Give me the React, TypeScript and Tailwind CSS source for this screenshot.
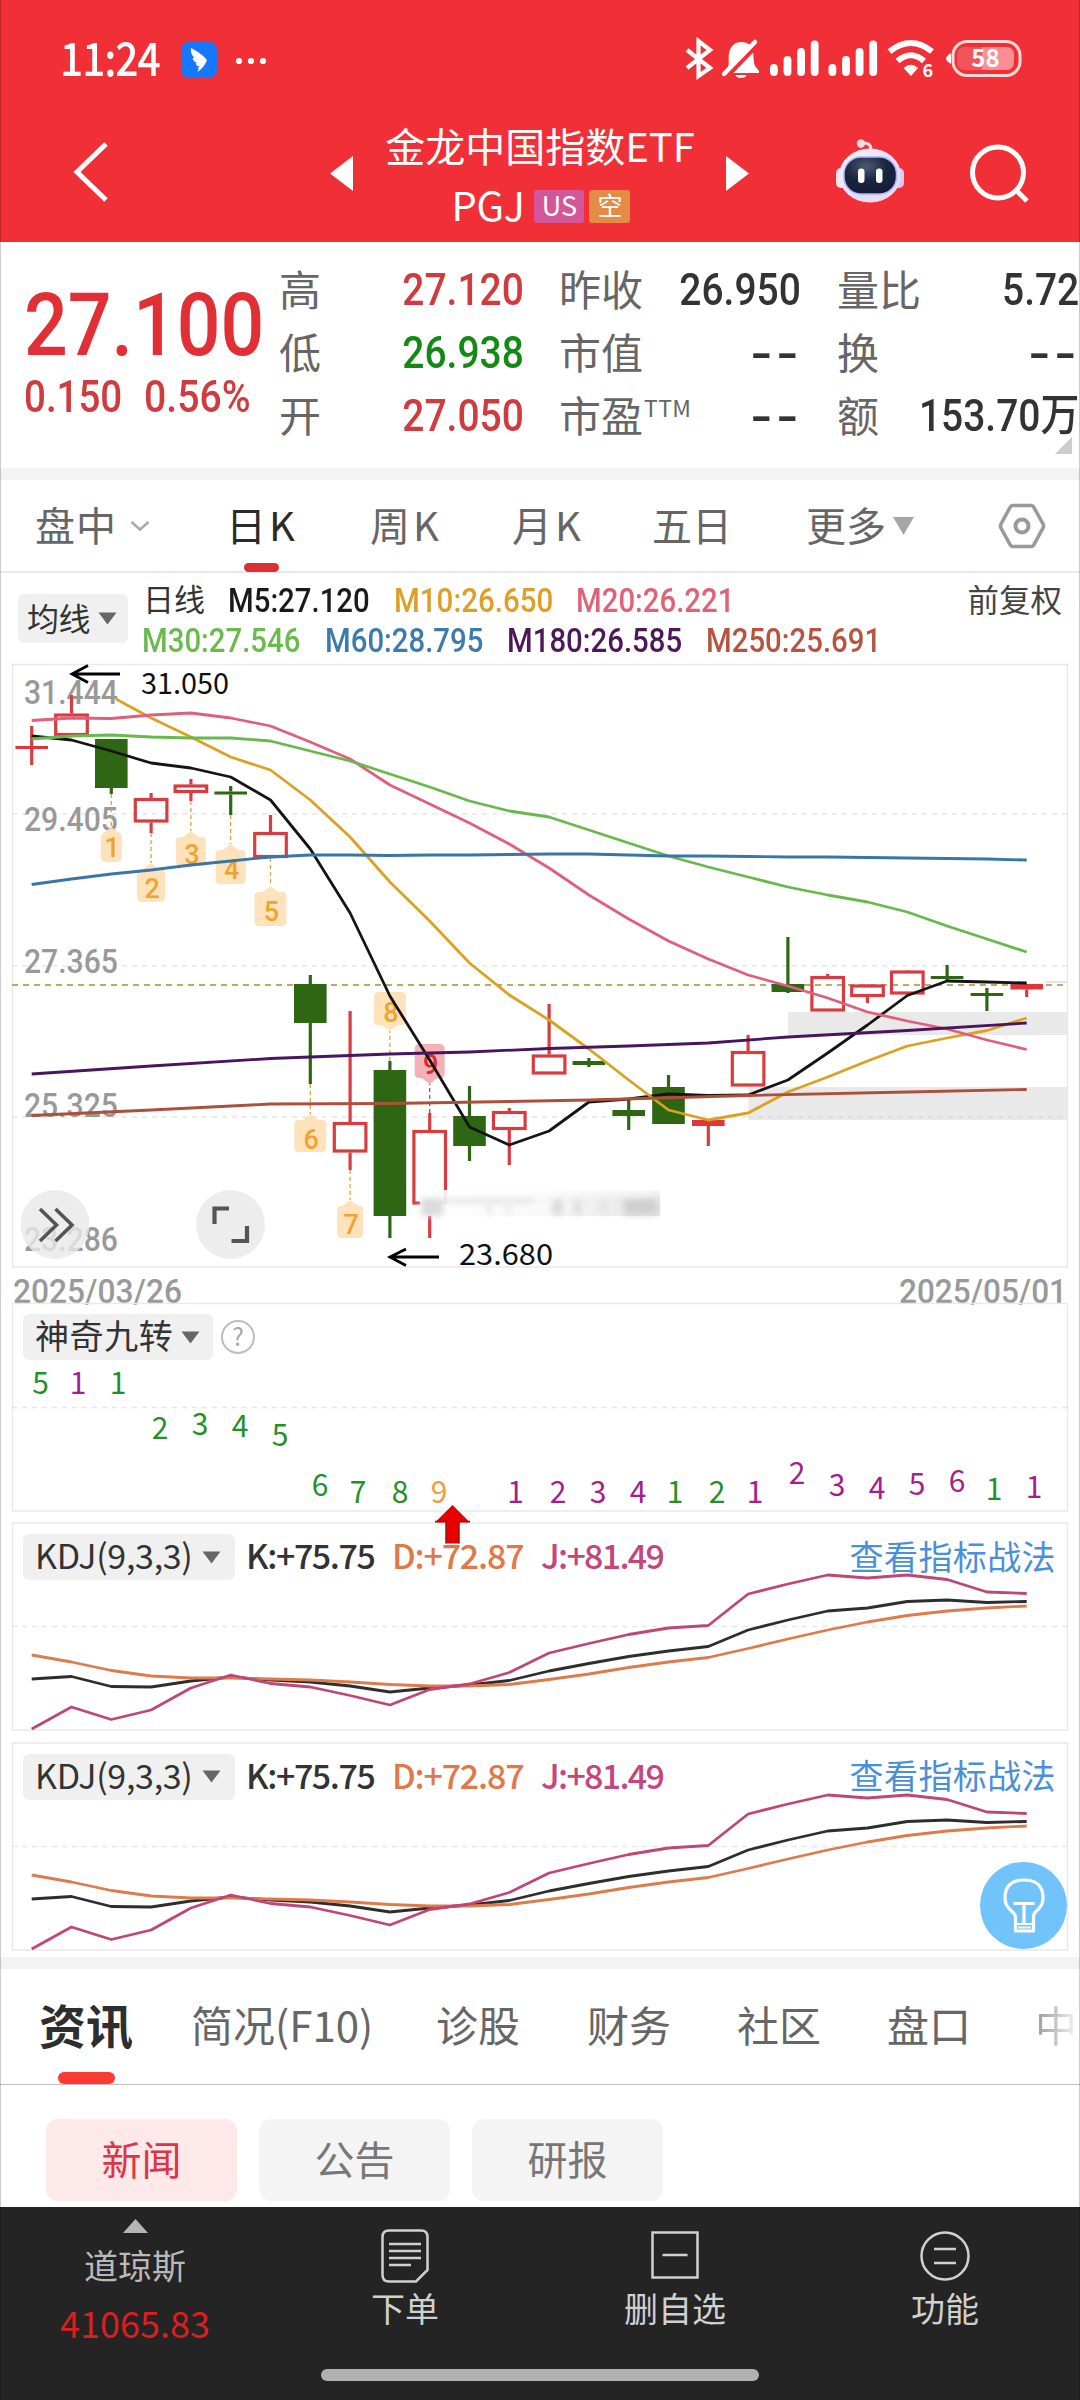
import React from "react";

const CJK = "font-['Noto_Sans_CJK_SC',sans-serif]";
const DIN = "font-['Roboto','Noto_Sans_CJK_SC',sans-serif]";

const STEP = 39.8;
const cx = (i: number) => 31.7 + STEP * i;

type Candle = { up: boolean; hi: number; top: number; bottom: number; lo: number; solid?: boolean };

const candles: Candle[] = [
  { up: true, hi: 726, top: 746, bottom: 749, lo: 765, solid: true },
  { up: true, hi: 695, top: 713.5, bottom: 736, lo: 736 },
  { up: false, hi: 739, top: 739, bottom: 788, lo: 794 },
  { up: true, hi: 793, top: 798, bottom: 822.5, lo: 833 },
  { up: true, hi: 779, top: 784.5, bottom: 793, lo: 801 },
  { up: false, hi: 786, top: 791.5, bottom: 794.5, lo: 815 },
  { up: true, hi: 815, top: 832, bottom: 858, lo: 858 },
  { up: false, hi: 975, top: 984, bottom: 1023, lo: 1084 },
  { up: true, hi: 1011, top: 1122, bottom: 1152.5, lo: 1170 },
  { up: false, hi: 1061, top: 1070, bottom: 1216, lo: 1238 },
  { up: true, hi: 1113, top: 1130, bottom: 1204.5, lo: 1238 },
  { up: false, hi: 1086, top: 1116, bottom: 1146, lo: 1161 },
  { up: true, hi: 1108, top: 1111, bottom: 1130, lo: 1165 },
  { up: true, hi: 1004, top: 1054.5, bottom: 1074.5, lo: 1074 },
  { up: false, hi: 1058, top: 1061, bottom: 1065, lo: 1067 },
  { up: false, hi: 1100, top: 1110, bottom: 1116, lo: 1130 },
  { up: false, hi: 1075, top: 1087, bottom: 1124, lo: 1124 },
  { up: true, hi: 1120, top: 1120, bottom: 1126, lo: 1146, solid: true },
  { up: true, hi: 1035, top: 1051, bottom: 1086.5, lo: 1086 },
  { up: false, hi: 937, top: 984, bottom: 992, lo: 993 },
  { up: true, hi: 974, top: 976, bottom: 1011.5, lo: 1011 },
  { up: true, hi: 984, top: 984.5, bottom: 997, lo: 1003 },
  { up: true, hi: 970, top: 970.5, bottom: 994.5, lo: 994 },
  { up: false, hi: 965, top: 976, bottom: 979, lo: 980 },
  { up: false, hi: 988, top: 993, bottom: 996, lo: 1011 },
  { up: true, hi: 984, top: 984, bottom: 989.5, lo: 997, solid: true },
];

const series = (ys: number[], start = 0) => ys.map((y, i) => `${cx(i + start).toFixed(1)},${y}`).join(" ");

const averages: { color: string; points: string }[] = [
  {
    color: "#141414",
    points: series([736, 740, 751, 763, 768, 777, 800, 849, 913, 996, 1060, 1127, 1145, 1131, 1102, 1099, 1094, 1095.5, 1095, 1080, 1053, 1025, 995.5, 981, 982, 983]),
  },
  {
    color: "#dca11f",
    points:
      "116,699 " +
      series([718, 737, 757, 770, 800, 837, 882, 921, 963, 995, 1020, 1049, 1080, 1110, 1120, 1113, 1092, 1077, 1061, 1046, 1038, 1030.5, 1018], 3),
  },
  {
    color: "#df5f7c",
    points: series([720.5, 718, 718.5, 715, 713, 718, 726, 742, 759, 785, 804, 823, 844, 868, 895, 919, 941, 959, 975, 986, 998, 1012, 1021, 1029, 1040, 1049.5]),
  },
  {
    color: "#68b94c",
    points: series([739, 736, 735, 737, 738, 738, 741, 751, 761, 774, 787, 801, 811, 817, 830, 843, 856, 867, 877, 887, 895, 902, 912, 926, 939, 952]),
  },
  {
    color: "#3677a8",
    points: series([884.5, 879, 874, 870, 865, 861, 857, 855, 855, 855.5, 855, 855, 854.5, 854, 854, 855, 856, 856, 856.5, 857, 857, 857.5, 858, 858.5, 859, 860]),
  },
  {
    color: "#47165e",
    points: `${cx(0)},1074 ${cx(3)},1066 ${cx(6)},1058.5 ${cx(9)},1054 ${cx(11)},1052 ${cx(13)},1048.5 ${cx(15)},1046 ${cx(17)},1043 ${cx(19)},1037 ${cx(22)},1030.5 ${cx(25)},1023`,
  },
  {
    color: "#ad4f3d",
    points: `${cx(0)},1115.5 ${cx(3)},1110 ${cx(6)},1104 ${cx(9)},1103.5 ${cx(12)},1101.5 ${cx(14)},1100 ${cx(18)},1095.5 ${cx(22)},1092 ${cx(25)},1089.5`,
  },
];

type Tag = { n: number; i: number; w: number; tip: number; end: number; from: number; down?: boolean; hot?: boolean; base: number };

const tags: Tag[] = [
  { n: 1, i: 2, w: 21, tip: 827, end: 862, from: 794, base: 857 },
  { n: 2, i: 3, w: 28, tip: 863, end: 902, from: 833, base: 898 },
  { n: 3, i: 4, w: 30, tip: 831, end: 866, from: 801, base: 864 },
  { n: 4, i: 5, w: 30, tip: 844, end: 884, from: 815, base: 879 },
  { n: 5, i: 6, w: 32, tip: 886, end: 926, from: 858, base: 921 },
  { n: 6, i: 7, w: 32, tip: 1114, end: 1152, from: 1084, base: 1149 },
  { n: 7, i: 8, w: 26, tip: 1200, end: 1238, from: 1170, base: 1234 },
  { n: 8, i: 9, w: 32, tip: 1031, end: 992, from: 1061, base: 1022, down: true },
  { n: 9, i: 10, w: 30, tip: 1084, end: 1044, from: 1113, base: 1074, down: true, hot: true },
];

const axis: [string, number][] = [
  ["31.444", 704],
  ["29.405", 831],
  ["27.365", 973],
  ["25.325", 1117],
  ["23.286", 1251],
];

function TagShape({ t }: { t: Tag }) {
  const x = cx(t.i);
  const h = t.w / 2;
  const s = t.down ? -1 : 1;
  const sh = t.tip + s * 7;
  const d = `M${x} ${t.tip} L${x + 8} ${sh - s * 1} H${x + h - 4} Q${x + h} ${sh - s} ${x + h} ${sh + s * 3} V${t.end - s * 5} Q${x + h} ${t.end} ${x + h - 5} ${t.end} H${x - h + 5} Q${x - h} ${t.end} ${x - h} ${t.end - s * 5} V${sh + s * 3} Q${x - h} ${sh - s} ${x - h + 4} ${sh - s} H${x - 8} Z`;
  return (
    <g>
      <line x1={x} x2={x} y1={t.from} y2={t.tip} stroke={t.hot ? "#c8434c" : "#d3a544"} strokeWidth="1.3" strokeDasharray="4 3" />
      <path d={d} fill={t.hot ? "#f4a2ab" : "#fde0b8"} fillOpacity={t.hot ? 0.85 : 0.95} />
      <text x={x + 1} y={t.base} textAnchor="middle" fontSize="27" fontWeight="500" fill={t.hot ? "#e0262f" : "#eda430"}>
        {t.n}
      </text>
    </g>
  );
}

function MainChart() {
  return (
    <svg className={`block h-[644px] w-[1080px] overflow-visible ${DIN}`} viewBox="0 660 1080 644">
      <defs>
        <filter id="soft" x="-20%" y="-40%" width="140%" height="180%">
          <feGaussianBlur stdDeviation="3" />
        </filter>
        <linearGradient id="smear" x1="0" x2="1" y1="0" y2="0">
          <stop offset="0" stopColor="#fff" />
          <stop offset="0.5" stopColor="#f8f8f8" />
          <stop offset="1" stopColor="#e2e2e2" />
        </linearGradient>
        <linearGradient id="fade" x1="0" x2="0" y1="0" y2="1">
          <stop offset="0" stopColor="#fff" />
          <stop offset="1" stopColor="#fff" stopOpacity="0" />
        </linearGradient>
      </defs>
      <rect x="12.5" y="664.5" width="1055" height="602.5" fill="none" stroke="#e9e9e9" strokeWidth="1.5" />
      {[814, 966, 1117].map((y) => (
        <line key={y} x1="12" x2="1067" y1={y} y2={y} stroke="#e6e6e6" strokeWidth="1.5" strokeDasharray="5 5" />
      ))}
      <rect x="788" y="1012" width="279" height="23" fill="#e9e9e9" />
      <rect x="748.5" y="1087" width="318.5" height="33" fill="#e9e9e9" />
      <line x1="748" x2="1067" y1="1117" y2="1117" stroke="#dadada" strokeWidth="1.5" strokeDasharray="5 5" />
      <line x1="1045" x2="1067" y1="982" y2="982" stroke="#e4e4e4" strokeWidth="2" />
      <line x1="12" x2="1067" y1="985" y2="985" stroke="#b9ac6b" strokeWidth="1.8" strokeDasharray="6 5" />

      {axis.map(([label, y]) => (
        <text key={label} x="24" y={y} fontSize="33.5" fontWeight="500" fill="#999" textLength="94" lengthAdjust="spacingAndGlyphs">
          {label}
        </text>
      ))}

      {candles.map((c, i) => {
        const x = cx(i);
        const color = c.up ? "#d93c40" : "#2f6614";
        return (
          <g key={i}>
            {c.hi < c.top && <line x1={x} x2={x} y1={c.hi} y2={c.top} stroke={color} strokeWidth="3.2" />}
            {c.lo > c.bottom && <line x1={x} x2={x} y1={c.bottom} y2={c.lo} stroke={color} strokeWidth="3.2" />}
            {c.up && !c.solid ? (
              <rect x={x - 15.8} y={c.top + 1.5} width="31.6" height={c.bottom - c.top - 3} fill="none" stroke={color} strokeWidth="3.2" />
            ) : (
              <rect x={x - 16.3} y={c.top} width="32.6" height={c.bottom - c.top} fill={c.up ? "#e23539" : color} />
            )}
          </g>
        );
      })}

      {tags.map((t) => (
        <TagShape key={t.n} t={t} />
      ))}

      {averages.map((a) => (
        <polyline key={a.color} points={a.points} fill="none" stroke={a.color} strokeWidth="2.8" strokeLinejoin="round" />
      ))}

      <g>
        <rect x="420" y="1190" width="240" height="26" fill="url(#smear)" opacity="0.9" />
        <g filter="url(#soft)">
          <rect x="421" y="1198" width="22" height="18" fill="#d9dddc" />
          <rect x="444" y="1199" width="90" height="3" fill="#d4d4d4" />
          <rect x="486" y="1197" width="6" height="18" fill="#ebebeb" />
          <rect x="505" y="1197" width="6" height="18" fill="#eeeeee" />
          <rect x="553" y="1199" width="9" height="16" fill="#d8d8d8" />
          <rect x="574" y="1199" width="7" height="16" fill="#dedede" />
          <rect x="600" y="1199" width="7" height="16" fill="#e4e4e4" />
          <rect x="624" y="1199" width="33" height="16" fill="#d0d0d0" />
        </g>
        <rect x="450" y="1186" width="215" height="14" fill="url(#fade)" />
      </g>

      <g stroke="#000" strokeWidth="2.8" fill="none">
        <path d="M120 674H72M88 665.5L72 674L88 682.5" />
        <path d="M439 1257H390M406 1249L390 1257L406 1265.5" />
      </g>
      <g className={CJK} fontSize="29" fill="#111">
        <text x="141" y="693.5" textLength="88" lengthAdjust="spacingAndGlyphs">31.050</text>
        <text x="459" y="1265" textLength="94" lengthAdjust="spacingAndGlyphs">23.680</text>
      </g>

      <g fill="#e9e9e9" fillOpacity="0.8">
        <circle cx="55" cy="1224.5" r="34.5" />
        <circle cx="230.5" cy="1224.5" r="34.5" />
      </g>
      <g fill="none" stroke="#555" strokeWidth="3.6">
        <path d="M40 1209L56.5 1225L40 1241M55.5 1209L72 1225L55.5 1241" />
        <path d="M214.5 1224V1208.5H229M231.5 1241H247V1226" strokeWidth="4.2" />
      </g>

      <g fontSize="34" fontWeight="500" fill="#999">
        <text x="13" y="1303" textLength="169" lengthAdjust="spacingAndGlyphs">2025/03/26</text>
        <text x="899" y="1303" textLength="168" lengthAdjust="spacingAndGlyphs">2025/05/01</text>
      </g>
    </svg>
  );
}

const G = "#1f9128";
const P = "#a61e8c";
const nine: [string, number, number, string][] = [
  ["5", 40.6, 1394, G], ["1", 78, 1394, P], ["1", 118, 1394, G],
  ["2", 160, 1439, G], ["3", 200, 1435, G], ["4", 240, 1437, G], ["5", 280, 1446, G],
  ["6", 320, 1496, G], ["7", 358, 1503, G], ["8", 400, 1503, G], ["9", 439, 1503, "#e8a13c"],
  ["1", 515.5, 1503, P], ["2", 558, 1503, P], ["3", 598, 1503, P], ["4", 638, 1503, P],
  ["1", 675, 1503, G], ["2", 717, 1503, G], ["1", 755, 1503, P], ["2", 797, 1484, P],
  ["3", 837, 1496, P], ["4", 877, 1499, P], ["5", 917, 1495, P], ["6", 957, 1492, P],
  ["1", 994, 1500, G], ["1", 1034, 1498, P],
];

function Caret({ className = "" }: { className?: string }) {
  return (
    <svg className={className} width="19" height="13" viewBox="0 0 19 13">
      <path d="M0.5 0.5H18.5L9.5 12.5Z" fill="#666" />
    </svg>
  );
}

function NinePanel() {
  return (
    <div className="relative -mt-px h-[219px]">
      <svg className={`absolute inset-0 overflow-visible ${CJK}`} width="1080" height="219" viewBox="0 1303 1080 219">
        <rect x="12.5" y="1303.5" width="1055" height="207.5" fill="none" stroke="#e9e9e9" strokeWidth="1.5" />
        <line x1="12" x2="1067" y1="1407.5" y2="1407.5" stroke="#e6e6e6" strokeWidth="1.5" strokeDasharray="5 5" />
        <g fontSize="30" textAnchor="middle">
          {nine.map(([n, x, y, c], i) => (
            <text key={i} x={x} y={y} fill={c}>
              {n}
            </text>
          ))}
        </g>
      </svg>
      <div className="relative flex items-center pt-[11px] pl-[23px]">
        <div className={`flex h-[46px] w-[190px] items-center rounded-md bg-[#f0f0f0] pl-[12px] text-[34px] leading-none tracking-[0.6px] text-[#333] ${CJK}`}>
          <span className="-mt-[4px]">神奇九转</span>
          <Caret className="ml-[8px]" />
        </div>
        <div className={`ml-[8px] flex size-[34px] items-center justify-center rounded-full border-[2.5px] border-[#bdbdbd] pb-[3px] text-[25px] leading-none text-[#aaa] ${CJK}`}>?</div>
      </div>
      <svg className="absolute top-[202px] left-[434px] z-10" width="37" height="40" viewBox="434 1505 37 40">
        <path d="M452.5 1505L470 1522.5H459V1543.5H446V1522.5H435Z" fill="#e60000" />
        <path d="M435 1521.5H446V1543.5M470 1521.5H459V1543.5" fill="none" stroke="#a30f0f" strokeWidth="1.5" />
      </svg>
    </div>
  );
}

const kLine = series([1679, 1676.5, 1686.5, 1687, 1681, 1677, 1680, 1682, 1686, 1692, 1688, 1685, 1680.5, 1671, 1663.5, 1656.5, 1651, 1646.5, 1630, 1620, 1611, 1608, 1601.5, 1600, 1602.5, 1601.5]);
const dLine = series([1655, 1662, 1670.5, 1676, 1678, 1678, 1679, 1680, 1682, 1684.5, 1686, 1686, 1684.5, 1679.5, 1674, 1667.5, 1662, 1657.5, 1648.5, 1639, 1630, 1622, 1615.5, 1611, 1608, 1606]);
const jLine = series([1729, 1707, 1719.5, 1710, 1688, 1675, 1683.5, 1687, 1695.5, 1705, 1689.5, 1684, 1672.5, 1653, 1643.5, 1634.5, 1628, 1625.5, 1594, 1584, 1575, 1578, 1575, 1579.5, 1592, 1593.5]);

function KdjPanel() {
  return (
    <div className="relative h-[219.5px] pt-[12px]">
      <svg className="absolute inset-0" width="1080" height="219.5" viewBox="0 1522 1080 219.5">
        <rect x="12.5" y="1523" width="1055" height="207" fill="none" stroke="#e9e9e9" strokeWidth="1.5" />
        <line x1="12" x2="1067" y1="1626.5" y2="1626.5" stroke="#e6e6e6" strokeWidth="1.5" strokeDasharray="5 5" />
        <g fill="none" strokeWidth="2.8" strokeLinejoin="round">
          <polyline points={kLine} stroke="#2e2e2e" />
          <polyline points={dLine} stroke="#dd7b4b" />
          <polyline points={jLine} stroke="#bf4679" />
        </g>
      </svg>
      <div className={`relative flex h-[46px] items-center pl-[23px] text-[34px] leading-none ${CJK}`}>
        <div className="flex h-[46px] w-[212px] shrink-0 items-center rounded-md bg-[#f0f0f0] pl-[12px] text-[#333]">
          <span className="-mt-[4px] w-[167px] tracking-[-0.3px]">KDJ(9,3,3)</span>
          <Caret />
        </div>
        <span className="-mt-[4px] ml-[11px] w-[146px] font-medium tracking-[-1.4px] whitespace-nowrap text-[#333]">K:+75.75</span>
        <span className="-mt-[4px] w-[149px] font-medium tracking-[-1.2px] whitespace-nowrap text-[#e0794a]">D:+72.87</span>
        <span className="-mt-[4px] font-medium tracking-[-1.7px] whitespace-nowrap text-[#c4467c]">J:+81.49</span>
        <span className="-mt-[3px] mr-[24px] ml-auto tracking-[0.4px] text-[#4a90d9]">查看指标战法</span>
      </div>
    </div>
  );
}

function StatusBar() {
  const bars = [12, 20, 28, 35.5];
  return (
    <div className="flex h-[118px] items-center pl-[60px]">
      <span className="flex w-[121px]">
        <span className={`-mt-[7px] inline-block origin-left scale-x-[0.885] text-[46px] leading-none font-medium tracking-[-1.2px] text-white ${CJK}`}>11:24</span>
      </span>
      <svg className="mt-[2px]" width="36" height="36" viewBox="0 0 36 36">
        <rect width="36" height="36" rx="8" fill="#1677ff" />
        <path d="M10 6C15 8.500 22 13 26 18C24.500 22.500 21 27 16.500 30C17.500 28 18 26.500 17 25.500L19 24C17 24.500 15.500 23.500 14.500 21.500L16 21C13.500 20 12 18 11.500 16L13.500 16C10.500 13 9.500 10 10 6Z" fill="#fff" />
      </svg>
      <svg className="mt-[3px] ml-[17px]" width="34" height="10" viewBox="0 0 34 10">
        <circle cx="5" cy="5" r="3.1" fill="#fff" />
        <circle cx="17" cy="5" r="3.1" fill="#fff" />
        <circle cx="29" cy="5" r="3.1" fill="#fff" />
      </svg>
      <svg className={`mr-[50px] ml-auto ${CJK}`} width="345" height="46" viewBox="685 37 345 46">
        <path d="M687 51L710 69L698.5 77V42L710 51L687 69" fill="none" stroke="#fff" strokeWidth="4.2" />
        <path d="M727 70C730 66 728 60 729 54C731 46 736 43 741 43C746 43 750 45 752 49C754 54 753 62 755 67L759 72V74H727Z" fill="#fff" />
        <path d="M735.5 76H746.5C746 80 736 80 735.5 76Z" fill="#fff" />
        <path d="M726 78L759 44" stroke="#f12f37" strokeWidth="5" />
        <path d="M724 75L755 43" stroke="#fff" strokeWidth="4.5" strokeLinecap="round" />
        {[770, 828.5].map((x) =>
          bars.map((h, i) => <rect key={`${x}-${i}`} x={x + i * 13.6} y={77 - h} width="7.8" height={h} rx="3.9" fill="#fff" />),
        )}
        <g fill="none" stroke="#fff" strokeWidth="6">
          <path d="M889.5 52.5Q911 35.5 932 52.5" />
          <path d="M897.5 62Q911 50.5 924 62" />
        </g>
        <path d="M903.5 69Q911 62.5 918 69L911 77Z" fill="#fff" />
        <text x="922.5" y="78" fontSize="18" fontWeight="700" fill="#fff">6</text>
        <rect x="953" y="42.5" width="67" height="34" rx="14" fill="none" stroke="#ffd9da" strokeWidth="3" />
        <path d="M982 48H1006Q1014 48 1014 56V63Q1014 71 1006 71H982Z" fill="#f98f95" />
        <path d="M982 48H965Q957 48 957 56V63Q957 71 965 71H982Z" fill="#f0555b" />
        <path d="M951 54Q946 57 946 59.5Q946 62 951 65Z" fill="#fff" />
        <text x="985.5" y="68" textAnchor="middle" fontSize="24" fontWeight="700" fill="#fff">58</text>
      </svg>
    </div>
  );
}

function Robot() {
  return (
    <svg width="72" height="66" viewBox="834 138 72 66">
      <defs>
        <linearGradient id="shell" x1="0" y1="0" x2="1" y2="1">
          <stop offset="0" stopColor="#fff4f6" />
          <stop offset="0.6" stopColor="#e3dcfb" />
          <stop offset="1" stopColor="#fbd5e2" />
        </linearGradient>
        <radialGradient id="visor" cx="0.42" cy="0.25" r="0.8">
          <stop offset="0" stopColor="#4c5a72" />
          <stop offset="0.5" stopColor="#1a2540" />
          <stop offset="1" stopColor="#141c38" />
        </radialGradient>
      </defs>
      <path d="M862 143Q871 142 871 150" fill="none" stroke="#ffe1e6" strokeWidth="3" />
      <circle cx="861" cy="143.5" r="4.2" fill="#ffd9df" />
      <rect x="836" y="168" width="11" height="20" rx="5" fill="#ffe6ec" />
      <rect x="893" y="168" width="11" height="20" rx="5" fill="#d6c8fb" />
      <ellipse cx="870" cy="175.5" rx="31" ry="27" fill="url(#shell)" />
      <rect x="844" y="157" width="52.5" height="37" rx="17" fill="url(#visor)" stroke="#a8b4ff" strokeWidth="1.5" />
      <rect x="858" y="168.5" width="6.5" height="14.5" rx="3.2" fill="#fff" />
      <rect x="876" y="168.5" width="6.5" height="14.5" rx="3.2" fill="#fff" />
    </svg>
  );
}

function Header() {
  return (
    <header className="h-[242px] bg-[#f12f37] text-white">
      <StatusBar />
      <div className="flex h-[104px] items-center pl-[72px]">
        <svg className="mt-1 w-[258px]" width="258" height="64" viewBox="73 139 258 64">
          <path d="M107 143L78 171L107 199" fill="none" stroke="#fff" strokeWidth="5" />
        </svg>
        <svg className="mt-[6px]" width="23" height="35" viewBox="0 0 23 35"><path d="M23 0V35L0 17.5Z" fill="#fff" /></svg>
        <div className={`ml-[24px] flex h-[112px] w-[328px] flex-col items-center ${CJK}`}>
          <div className="mt-px ml-[-2px] text-[40px] leading-[60px] whitespace-nowrap">金龙中国指数ETF</div>
          <div className="mt-[11px] flex h-[44px] items-center gap-[5px]">
            <span className="-mt-[5px] mr-[5px] text-[40px] leading-none tracking-[-0.5px]">PGJ</span>
            <span className="flex h-[33px] w-[50px] items-center justify-center rounded-[3px] bg-[#d4569a] pb-[3px] text-[27px] leading-none">US</span>
            <span className="flex h-[33px] w-[41px] items-center justify-center rounded-[3px] bg-[#e38b47] pb-[3px] text-[25px] leading-none">空</span>
          </div>
        </div>
        <svg className="mt-[6px] ml-[21px]" width="23" height="35" viewBox="0 0 23 35"><path d="M0 0V35L23 17.5Z" fill="#fff" /></svg>
        <div className="mt-[2px] ml-[85px]"><Robot /></div>
        <svg className="mt-[7px] ml-[62px]" width="62" height="62" viewBox="968 143 62 62">
          <circle cx="998" cy="172.5" r="25.5" fill="none" stroke="#fff" strokeWidth="5" />
          <path d="M1016 190L1027 201" stroke="#fff" strokeWidth="5" />
        </svg>
      </div>
    </header>
  );
}

type Row = { label: string; sup?: string; value: string; color?: string };

function QuoteColumn({ rows, className }: { rows: Row[]; className: string }) {
  return (
    <div className={className}>
      {rows.map((r) => (
        <div key={r.label} className="relative flex h-[63px] items-center justify-between">
          <span className={`-mt-[6px] flex text-[42px] leading-none whitespace-nowrap text-[#666] ${CJK}`}>
            {r.label}
            {r.sup && <span className="mt-[3px] ml-[1px] text-[23px] leading-none tracking-[0.4px]">{r.sup}</span>}
          </span>
          {r.value === "--" ? (
            <span className="-mt-[2px] font-['Inter',sans-serif] text-[50px] leading-none font-medium tracking-[3px] text-[#333]">--</span>
          ) : (
            <span className={`absolute right-px origin-right scale-x-[0.875] text-[44.5px] leading-none font-medium whitespace-nowrap ${DIN} ${r.color ?? "text-[#333]"}`}>{r.value}</span>
          )}
        </div>
      ))}
    </div>
  );
}

function Quote() {
  return (
    <section className="relative flex h-[226px] pt-[17px]">
      <div className={`w-[279px] pl-[24px] text-[#e03035] ${DIN}`}>
        <div className="mt-[22px] origin-left scale-x-[0.875] text-[88px] leading-none font-medium whitespace-nowrap">27.100</div>
        <div className="mt-[7px] flex text-[43.5px] leading-none font-medium text-[#cf3b3f]">
          <span className="w-[120px] origin-left scale-x-[0.885]">0.150</span>
          <span className="origin-left scale-x-[0.9]">0.56%</span>
        </div>
      </div>
      <QuoteColumn
        className="w-[246px]"
        rows={[
          { label: "高", value: "27.120", color: "text-[#cf3b3f]" },
          { label: "低", value: "26.938", color: "text-[#138a13]" },
          { label: "开", value: "27.050", color: "text-[#cf3b3f]" },
        ]}
      />
      <QuoteColumn
        className="ml-[34px] w-[243px]"
        rows={[
          { label: "昨收", value: "26.950" },
          { label: "市值", value: "--" },
          { label: "市盈", sup: "TTM", value: "--" },
        ]}
      />
      <QuoteColumn
        className="ml-[35px] w-[243px]"
        rows={[
          { label: "量比", value: "5.72" },
          { label: "换", value: "--" },
          { label: "额", value: "153.70万" },
        ]}
      />
      <svg className="absolute right-[8px] bottom-[14px]" width="17" height="17" viewBox="0 0 17 17"><path d="M17 0V17H0Z" fill="#ccc" /></svg>
    </section>
  );
}

function PeriodTabs() {
  return (
    <nav className={`flex h-[93px] items-center border-b-2 border-[#eaeaea] pl-[35px] text-[40px] leading-none text-[#666] ${CJK}`}>
      <div className="flex w-[191px] items-center">
        <span className="-mt-[4px] tracking-[1px]">盘中</span>
        <svg className="ml-[13px]" width="20" height="12" viewBox="0 0 20 12"><path d="M1.5 2L10 9.5L18.5 2" fill="none" stroke="#aaa" strokeWidth="2.6" /></svg>
      </div>
      <div className="relative flex h-full w-[144px] items-center tracking-[3px] text-[#2b2b2b]">
        <span className="-mt-[4px]">日K</span>
        <div className="absolute bottom-[-1px] left-[18px] h-[9px] w-[35px] rounded-full bg-[#de3033]" />
      </div>
      <div className="-mt-[4px] w-[142px] tracking-[3px]">周K</div>
      <div className="-mt-[4px] w-[140px] tracking-[3px]">月K</div>
      <div className="-mt-[4px] w-[154px]">五日</div>
      <div className="flex w-[192px] items-center">
        <span className="-mt-[4px]">更多</span>
        <svg className="ml-[7px]" width="21" height="18" viewBox="0 0 21 18"><path d="M0 0H21L10.5 18Z" fill="#a6a6a6" /></svg>
      </div>
      <svg width="48" height="46" viewBox="0 0 48 46">
        <path d="M15 2.5H33Q35 2.5 36 4.5L45 21Q46 23 45 25L36 41.5Q35 43.5 33 43.5H15Q13 43.5 12 41.5L3 25Q2 23 3 21L12 4.5Q13 2.5 15 2.5Z" fill="none" stroke="#999" strokeWidth="3.6" />
        <circle cx="24" cy="23" r="6.5" fill="none" stroke="#999" strokeWidth="4" />
      </svg>
    </nav>
  );
}

function Averages() {
  return (
    <div className="flex h-[87px] pl-[18px]">
      <div className={`mt-[21px] flex h-[49px] w-[110px] items-center rounded-md bg-[#f0f0f0] pl-[9px] text-[32px] leading-none text-[#333] ${CJK}`}>
        <span className="-mt-[4px] tracking-[-0.5px]">均线</span>
        <Caret className="ml-[8px]" />
      </div>
      <div className={`ml-[14px] flex grow flex-col pt-[8px] text-[33px] leading-[40px] font-medium whitespace-nowrap ${DIN}`}>
        <div className="flex">
          <span className={`-mt-[3px] w-[86px] pl-px text-[31px] font-normal text-[#333] ${CJK}`}>日线</span>
          <span className="w-[166px] origin-left scale-x-[0.89] text-[#1a1a1a]">M5:27.120</span>
          <span className="w-[182px] origin-left scale-x-[0.895] text-[#dd9f26]">M10:26.650</span>
          <span className="origin-left scale-x-[0.89] text-[#df6277]">M20:26.221</span>
          <span className={`-mt-[3px] mr-[18px] ml-auto text-[31.5px] font-normal text-[#444] ${CJK}`}>前复权</span>
        </div>
        <div className="flex">
          <span className="w-[183px] origin-left scale-x-[0.89] text-[#6bba4f]">M30:27.546</span>
          <span className="w-[182px] origin-left scale-x-[0.89] text-[#3d7bab]">M60:28.795</span>
          <span className="w-[199px] origin-left scale-x-[0.89] text-[#4b1858]">M180:26.585</span>
          <span className="origin-left scale-x-[0.89] text-[#b5553f]">M250:25.691</span>
        </div>
      </div>
    </div>
  );
}

function NewsTabs() {
  const items: [string, string][] = [
    ["简况(F10)", "w-[245px]"],
    ["诊股", "w-[151px]"],
    ["财务", "w-[150px]"],
    ["社区", "w-[150px]"],
    ["盘口", "w-[148px]"],
  ];
  return (
    <nav className={`flex h-[116px] items-center overflow-hidden border-b-[1.5px] border-[#bfbfbf] pl-[39px] text-[42px] leading-none whitespace-nowrap text-[#666] ${CJK}`}>
      <div className="relative flex h-full w-[152px] shrink-0 items-center text-[47px] text-[#2e2e2e]">
        <span className="-mt-[6px] font-bold">资讯</span>
        <div className="absolute bottom-0 left-[19px] h-[12px] w-[57px] rounded-full bg-[#f93b34]" />
      </div>
      {items.map(([t, w]) => (
        <span key={t} className={`-mt-[5px] shrink-0 ${w}`}>{t}</span>
      ))}
      <span className="-mt-[5px] shrink-0 bg-linear-to-r from-[#999] to-[#f4f4f4] bg-clip-text leading-[62px] text-transparent">中</span>
    </nav>
  );
}

function BottomBar() {
  return (
    <footer className={`flex h-[193px] flex-col bg-[#242424] text-[34px] leading-none text-[#d0d0d0] ${CJK}`}>
      <div className="grid h-[162px] grid-cols-4 justify-items-center">
        <div className="flex flex-col items-center pt-[12px] text-[#b9b9b9]">
          <svg width="25" height="14" viewBox="0 0 25 14"><path d="M12.5 0L25 14H0Z" fill="#b5b5b5" /></svg>
          <span className="mt-[15px]">道琼斯</span>
          <span className="mt-[22px] text-[36px] text-[#d91f1f]">41065.83</span>
        </div>
        <div className="flex flex-col items-center pt-[22px]">
          <svg width="48" height="54" viewBox="0 0 48 54" fill="none" stroke="#d0d0d0" strokeWidth="2.5">
            <path d="M8 1.5H40Q46.5 1.5 46.5 8V41L35 52.5H8Q1.5 52.5 1.5 46V8Q1.5 1.5 8 1.5Z" />
            <path d="M8 15H40M8 22H40M8 29H40M8 36H30" />
          </svg>
          <span className="mt-[8px]">下单</span>
        </div>
        <div className="flex flex-col items-center pt-[24px]">
          <svg width="48" height="48" viewBox="0 0 48 48" fill="none" stroke="#d0d0d0" strokeWidth="2.5">
            <rect x="1.5" y="1.5" width="45" height="45" />
            <path d="M11.5 24H36.5" />
          </svg>
          <span className="mt-[12px]">删自选</span>
        </div>
        <div className="flex flex-col items-center pt-[24px]">
          <svg width="50" height="50" viewBox="0 0 50 50" fill="none" stroke="#d0d0d0" strokeWidth="2.5">
            <circle cx="25" cy="25" r="23.5" />
            <path d="M14 18H36M14 32H36" />
          </svg>
          <span className="mt-[10px]">功能</span>
        </div>
      </div>
      <div className="mx-auto h-[12px] w-[438px] rounded-full bg-[#b1b1b1]" />
    </footer>
  );
}

export default function App() {
  return (
    <div className="relative flex h-[2400px] w-[1080px] flex-col overflow-hidden bg-white">
      <Header />
      <Quote />
      <div className="h-[12px] bg-[#f3f3f3]" />
      <PeriodTabs />
      <Averages />
      <MainChart />
      <NinePanel />
      <KdjPanel />
      <div className="relative">
        <KdjPanel />
        <div className="absolute top-[120.5px] right-[13px] flex size-[87px] items-center justify-center rounded-full bg-[#70c3fb]">
          <svg width="44" height="58" viewBox="0 0 44 58" fill="none" stroke="#fff" strokeWidth="3.2">
            <path d="M13.5 39Q12 36 8 32.5Q3 28 3 21Q3 3 22 3Q41 3 41 21Q41 28 36 32.5Q32 36 31.5 39V54H13.5Z" strokeLinejoin="round" />
            <path d="M11.5 26.5H32.5M22 27V47" />
            <path d="M14 47H31M16 50.5H29" strokeWidth="2" />
          </svg>
        </div>
      </div>
      <div className="-mt-[4px] h-[12px] bg-[#f3f3f3]" />
      <NewsTabs />
      <div className={`flex h-[122px] gap-[22px] pt-[34px] pl-[46px] text-[40px] leading-none text-[#777] ${CJK}`}>
        <div className="flex h-[82px] w-[191px] items-center justify-center rounded-xl bg-[#fde8ea] pb-[4px] text-[#dd3545]">新闻</div>
        <div className="flex h-[82px] w-[191px] items-center justify-center rounded-xl bg-[#f4f4f4] pb-[4px]">公告</div>
        <div className="flex h-[82px] w-[191px] items-center justify-center rounded-xl bg-[#f4f4f4] pb-[4px]">研报</div>
      </div>
      <BottomBar />
      <div className="pointer-events-none absolute inset-y-0 left-0 w-px bg-black/20" />
      <div className="pointer-events-none absolute inset-y-0 right-0 w-px bg-black/20" />
    </div>
  );
}
